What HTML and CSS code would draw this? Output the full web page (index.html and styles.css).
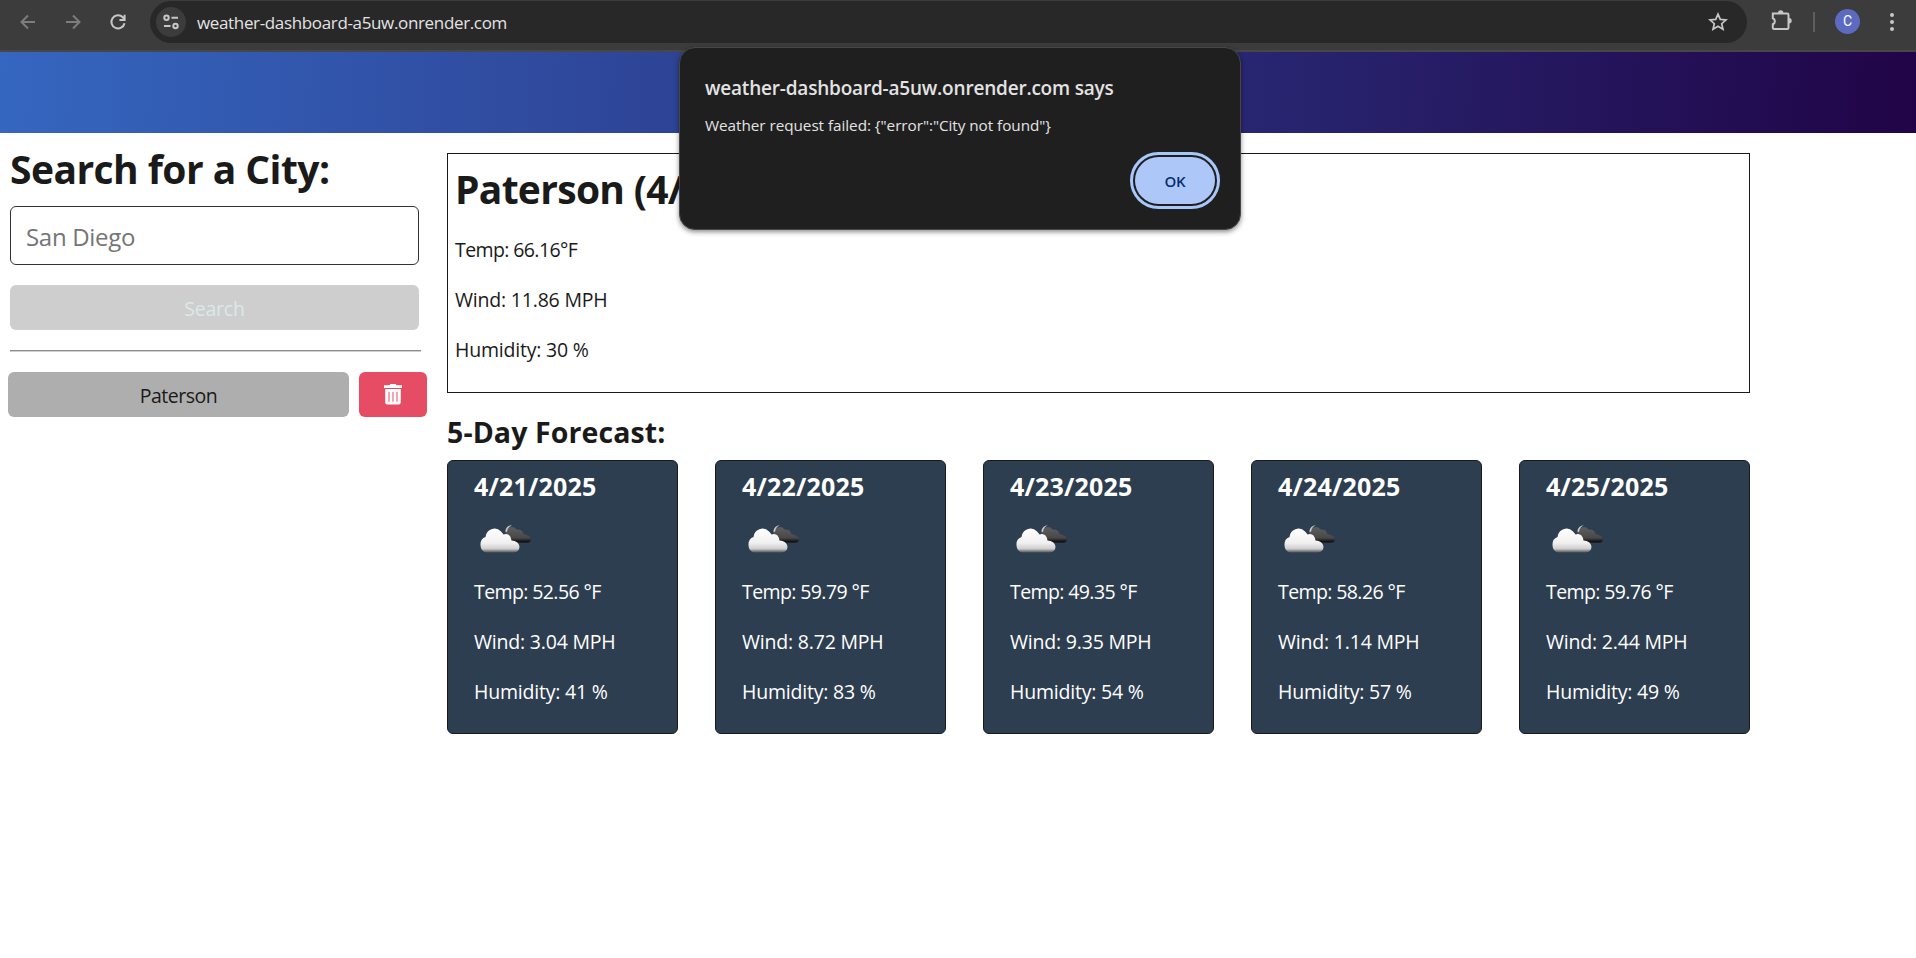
FILE: index.html
```html
<!DOCTYPE html>
<html lang="en">
<head>
<meta charset="utf-8">
<title>Weather Dashboard</title>
<link rel="stylesheet" href="styles.css">
</head>
<body>
<svg width="0" height="0" class="defs" aria-hidden="true">
  <defs>
    <linearGradient id="light" x1="0" y1="0" x2="0" y2="1">
      <stop offset="0" stop-color="#fff"/><stop offset=".6" stop-color="#f0f0f0"/><stop offset=".84" stop-color="#cfcfcf"/><stop offset="1" stop-color="#555"/>
    </linearGradient>
    <linearGradient id="dark" x1="0" y1="0" x2="0" y2="1">
      <stop offset="0" stop-color="#5e5e5e"/><stop offset=".7" stop-color="#484848"/><stop offset="1" stop-color="#050505"/>
    </linearGradient>
    <symbol id="cloud" viewBox="0 0 62 62">
      <path d="M31 26a6.500 6.500 0 0 1 11.500-3.500a6 6 0 0 1 7 4.500q7 1.500 7.500 5q0 3.500-4 3.500H40z" fill="url(#dark)"/>
      <path d="M31.300 24.500Q32 18.500 38 18.200Q33.500 20 33 25z" fill="#c9c9c9"/>
      <path d="M12 45.500a7 8 0 0 1-.5-15.500a9 9 0 0 1 15.500-5.500q2 2 2.500 3q6.500-2 8 6q7 .5 8 6q0 5.500-6 6z" fill="url(#light)"/>
    </symbol>
  </defs>
</svg>

<div class="toolbar">
  <div class="nav">
    <svg class="dim" width="20" height="20" viewBox="0 0 20 20"><path d="M17 10H4M10 3.500L3.500 10l6.500 6.500"/></svg>
    <svg class="dim" width="20" height="20" viewBox="0 0 20 20"><path d="M3 10h13M10 3.500l6.500 6.500-6.500 6.500"/></svg>
    <svg width="20" height="20" viewBox="0 0 20 20"><path d="M16.500 11.200A6.600 6.600 0 1 1 14.800 5.300L16.200 7.500M16.600 2.800V8H11.400"/></svg>
  </div>
  <div class="omnibox">
    <span class="site-info"><svg width="18" height="18" viewBox="0 0 18 18"><circle cx="4.500" cy="4.700" r="2.200"/><path d="M9.500 4.700H16M2 13h6.500"/><circle cx="13.500" cy="13" r="2.200"/></svg></span>
    <span class="url">weather-dashboard-a5uw.onrender.com</span>
    <svg class="star" width="20" height="20" viewBox="0 0 20 20"><path d="M10 2.200l2.300 5.200 5.700.5-4.300 3.800 1.300 5.600-5-3-5 3 1.300-5.600L2 7.900l5.700-.5z"/></svg>
  </div>
  <div class="actions">
    <svg width="24" height="24" viewBox="0 0 24 24"><path d="M3.800 5.500h14.400q1.300 0 1.300 1.300v13q0 1.300-1.300 1.300H5.100q-1.300 0-1.300-1.300v-3.500a3.200 3.200 0 0 0 0-6z"/><path class="fill" d="M9 5a2.700 2.700 0 0 1 5.400 0zM20 10a2.700 2.700 0 0 1 0 5.400z"/></svg>
    <span class="divider"></span>
    <span class="avatar">C</span>
    <svg class="dots" width="6" height="20" viewBox="0 0 6 20"><circle cx="3" cy="3" r="2"/><circle cx="3" cy="10" r="2"/><circle cx="3" cy="17" r="2"/></svg>
  </div>
</div>

<header class="hero"></header>

<div class="page">
  <aside class="sidebar">
    <form class="search">
      <h1>Search for a City:</h1>
      <input class="field" type="text" placeholder="San Diego">
      <button class="btn search-btn" type="button">Search</button>
      <hr>
    </form>
    <div class="history">
      <button class="btn city-btn" type="button">Paterson</button>
      <button class="btn delete-btn" type="button" aria-label="Delete"><svg width="18" height="21" viewBox="0 0 18 21"><path d="M6.300 0h5.400l.8 1.200H18V4H0V1.200h5.500z"/><path fill-rule="evenodd" d="M1.200 5h15.600v13.300q0 2.300-2.300 2.300h-11q-2.300 0-2.300-2.300zM4.500 7.800v10h1v-10zM8.500 7.800v10h1v-10zM12.500 7.800v10h1v-10z"/></svg></button>
    </div>
  </aside>
  <main class="content">
    <section class="today">
      <h2>Paterson (4/20/2025)</h2>
      <p class="temp">Temp: 66.16°F</p>
      <p>Wind: 11.86 MPH</p>
      <p>Humidity: 30 %</p>
    </section>
    <h3>5-Day Forecast:</h3>
    <section class="forecast">
      <article class="card"><h4>4/21/2025</h4><svg class="icon"><use href="#cloud"/></svg><p class="temp">Temp: 52.56 °F</p><p>Wind: 3.04 MPH</p><p>Humidity: 41 %</p></article>
      <article class="card"><h4>4/22/2025</h4><svg class="icon"><use href="#cloud"/></svg><p class="temp">Temp: 59.79 °F</p><p>Wind: 8.72 MPH</p><p>Humidity: 83 %</p></article>
      <article class="card"><h4>4/23/2025</h4><svg class="icon"><use href="#cloud"/></svg><p class="temp">Temp: 49.35 °F</p><p>Wind: 9.35 MPH</p><p>Humidity: 54 %</p></article>
      <article class="card"><h4>4/24/2025</h4><svg class="icon"><use href="#cloud"/></svg><p class="temp">Temp: 58.26 °F</p><p>Wind: 1.14 MPH</p><p>Humidity: 57 %</p></article>
      <article class="card"><h4>4/25/2025</h4><svg class="icon"><use href="#cloud"/></svg><p class="temp">Temp: 59.76 °F</p><p>Wind: 2.44 MPH</p><p>Humidity: 49 %</p></article>
    </section>
  </main>
</div>

<div class="dialog" role="alertdialog">
  <div class="dialog-title">weather-dashboard-a5uw.onrender.com says</div>
  <div class="dialog-text">Weather request failed: {"error":"City not found"}</div>
  <button class="ok" type="button">OK</button>
</div>
</body>
</html>
```
FILE: styles.css
```css
* { box-sizing: border-box; margin: 0; padding: 0; }
body { height: 958px; overflow: hidden; background: #fff; color: #1a1a1a; font: 19.5px/30px "Open Sans", "Noto Sans", sans-serif; letter-spacing: -0.2px; }
button, input { font: inherit; letter-spacing: inherit; border: 0; }
.defs { position: absolute; }

.toolbar { display: flex; height: 52px; background: #3c3c3c; border-bottom: 2px solid #474747; }
.toolbar svg { fill: none; stroke: #c7c7c7; stroke-width: 2; flex: none; }
.toolbar .dim { stroke: #7d7d7d; }
.nav { display: flex; gap: 25px; width: 150px; padding: 12px 0 0 18px; }
.omnibox { display: flex; align-items: center; width: 1597px; height: 42px; margin-top: 1px; padding: 0 19px 0 6px; border-radius: 21px; background: #282828; }
.site-info { display: flex; align-items: center; justify-content: center; width: 30px; height: 30px; border-radius: 50%; background: #3c3c3c; }
.url { flex: 1; margin-left: 11px; padding-top: 1px; color: #e3e3e3; font-size: 17px; letter-spacing: -0.35px; }
.omnibox .star { stroke-width: 1.700; }
.actions { display: flex; align-items: flex-start; padding-left: 22px; }
.actions > svg:first-child { margin-top: 8px; }
.actions .fill, .actions .dots { fill: #c7c7c7; stroke: none; }
.divider { width: 2px; height: 20px; margin: 12px 0 0 20px; background: #5e5e5e; }
.avatar { width: 25px; height: 25px; margin: 9px 0 0 20px; border-radius: 50%; background: #5c6bc0; color: #fff; font: 14px/25px Roboto, sans-serif; text-align: center; }
.actions .dots { margin: 12px 0 0 29px; }

.hero { height: 81px; background: linear-gradient(92deg, #3566c0, #210447); }

.page { display: flex; }
.sidebar { width: 447px; padding: 11px 20px 0 8px; }
.search { padding: 0 6px 0 2px; }
h1, h2 { font-size: 39px; line-height: 50px; letter-spacing: -0.55px; }
h2 { letter-spacing: -0.7px; }
.field { display: block; width: 409px; height: 59px; margin-top: 12px; padding: 2px 15px 0; border: 1px solid #333; border-radius: 6px; font-size: 24px; letter-spacing: -0.3px; background: #fff; }
.field::placeholder { color: #757575; }
.btn { height: 45px; padding-top: 2px; border-radius: 6px; text-align: center; }
.search-btn { display: block; width: 409px; margin-top: 20px; background: #cecece; color: #dbe9e8; }
hr { width: 411px; margin-top: 20px; border: 0; border-top: 1px solid #8f8f8f; border-bottom: 1px solid #d0d0d0; }
.history { display: flex; gap: 10px; margin-top: 20px; }
.city-btn { width: 341px; background: #aeaeae; color: #1a1a1a; letter-spacing: -0.5px; }
.delete-btn { width: 68px; padding: 0; background: #e74c65; display: flex; align-items: center; justify-content: center; }
.delete-btn svg { fill: #fff; }

.content { width: 1303px; padding-top: 20px; }
.today { height: 240px; padding: 10px 7px; border: 1px solid #1a1a1a; }
.today p { margin-bottom: 20px; }
.today .temp { margin-top: 21px; }
h3 { margin-top: 19px; font-size: 28.5px; line-height: 40px; letter-spacing: 0.1px; }
.forecast { display: flex; justify-content: space-between; margin-top: 8px; }
.card { width: 231px; height: 274px; padding: 9px 26px; border: 1px solid #1a1a1a; border-radius: 6px; background: #2d3e50; color: #fff; }
.card h4 { font-size: 25px; line-height: 32px; letter-spacing: 0.2px; }
.card .icon { display: block; width: 62px; height: 62px; margin: 5px 0 8px; }
.card p { margin-bottom: 20px; }
p.temp { letter-spacing: -0.6px; }

.dialog { position: absolute; left: 679px; top: 47px; width: 562px; height: 183px; padding: 25px; border: 1px solid #474747; border-radius: 16px; background: #1f1f1f; color: #e3e3e3; box-shadow: 0 2px 5px rgba(0,0,0,.45); display: flex; flex-direction: column; }
.dialog-title { font-size: 19px; font-weight: 600; line-height: 30px; }
.dialog-text { margin-top: 10px; font-size: 15.3px; letter-spacing: -0.05px; line-height: 24px; }
.ok { align-self: flex-end; width: 80px; height: 47px; margin: 20px 0 0 0; border-radius: 24px; background: #adc8f8; color: #062e6f; font-size: 15px; font-weight: 600; outline: 3px solid #a8c7fa; outline-offset: 2px; }
```
